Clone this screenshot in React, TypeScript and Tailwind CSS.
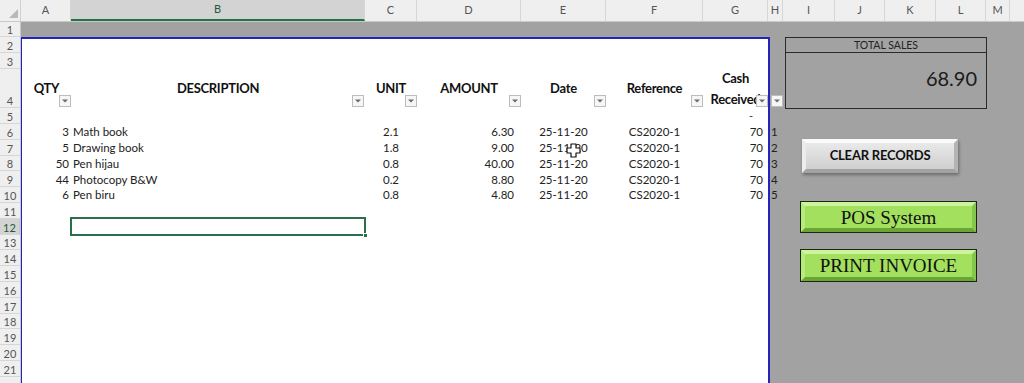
import React from "react";

const colHeaders = [
  { label: "A", w: "w-[50px]" },
  { label: "B", w: "w-[294px]", active: true },
  { label: "C", w: "w-[52px]" },
  { label: "D", w: "w-[104px]" },
  { label: "E", w: "w-[85px]" },
  { label: "F", w: "w-[97px]" },
  { label: "G", w: "w-[65px]" },
  { label: "H", w: "w-[15px]" },
  { label: "I", w: "w-[52px]" },
  { label: "J", w: "w-[50px]" },
  { label: "K", w: "w-[51px]" },
  { label: "L", w: "w-[50px]" },
  { label: "M", w: "w-[24px]" },
];

const items = [
  { qty: 3, desc: "Math book", unit: "2.1", amount: "6.30" },
  { qty: 5, desc: "Drawing book", unit: "1.8", amount: "9.00" },
  { qty: 50, desc: "Pen hijau", unit: "0.8", amount: "40.00" },
  { qty: 44, desc: "Photocopy B&W", unit: "0.2", amount: "8.80" },
  { qty: 6, desc: "Pen biru", unit: "0.8", amount: "4.80" },
];

const font = "font-['Lato',sans-serif]";

function Filter({ className = "" }: { className?: string }) {
  return (
    <span
      className={`absolute bottom-[1px] right-0 w-[12px] h-[12px] border border-[#bdbdbd] bg-[#f6f6f6] flex items-center justify-center ${className}`}
    >
      <svg width="6" height="4" viewBox="0 0 6 4">
        <path d="M0 0.5h6L3 3.5z" fill="#6a6a6a" />
      </svg>
    </span>
  );
}

function RowHeader() {
  const cell =
    "flex items-end justify-center pb-[1px] border-b border-[#d6d6d6] border-r border-r-[#c8c8c8]";
  const rest = Array.from({ length: 16 }, (_, i) => i + 6);
  return (
    <div className={`w-[21px] shrink-0 bg-[#efefef] text-[11px] text-[#555] leading-none ${font}`}>
      <div className={`${cell} h-[15px]`}>1</div>
      <div className={`${cell} h-[16px]`}>2</div>
      <div className={`${cell} h-[16px]`}>3</div>
      <div className={`${cell} h-[39px]`}>4</div>
      <div className={`${cell} h-[16px]`}>5</div>
      {rest.map((n) => (
        <div
          key={n}
          className={`${cell} h-[15.8px] ${
            n === 12 ? "bg-[#d3d3d3] text-[#1f5a38] border-r-2 border-r-[#217346]" : ""
          }`}
        >
          {n}
        </div>
      ))}
      <div className={`${cell} h-[20px]`} />
    </div>
  );
}

export default function App() {
  const dataRowCls = "h-[15.8px] flex items-center text-[11.5px] text-[#222] leading-none";

  return (
    <div className={`w-[1024px] h-[383px] overflow-hidden bg-white ${font}`}>
      {/* column letters */}
      <div className="flex h-[22px] bg-[#efefef] border-b border-[#c9c9c9] text-[11px] text-[#555]">
        <div className="w-[21px] shrink-0 relative border-r border-[#d0d0d0]">
          <svg className="absolute right-[2px] bottom-[3px]" width="9" height="9" viewBox="0 0 9 9">
            <path d="M9 0V9H0z" fill="#b9b9b9" />
          </svg>
        </div>
        {colHeaders.map((c) => (
          <div
            key={c.label}
            className={`${c.w} shrink-0 flex items-center justify-center border-r border-[#d6d6d6] ${
              c.active ? "bg-[#d3d3d3] border-b-2 border-b-[#217346] text-[#1f5a38]" : ""
            }`}
          >
            {c.label}
          </div>
        ))}
        <div className="flex-1" />
      </div>

      <div className="flex h-[361px]">
        <RowHeader />

        <div className="flex-1 bg-[#a2a2a2] flex flex-col">
          <div className="h-[15px] shrink-0" />

          <div className="flex flex-1 min-h-0">
            {/* print area */}
            <div className="w-[749px] shrink-0 bg-white border-t-2 border-r-2 border-l border-[#2424bd] relative">
              <div className="h-[14px]" />
              <div className="h-[16px]" />

              {/* header row */}
              <div className="h-[39px] flex text-[13px] font-bold text-[#111] tracking-[-0.3px]">
                <div className="w-[49px] relative flex items-center justify-center">
                  QTY
                  <Filter />
                </div>
                <div className="w-[294px] relative flex items-center justify-center">
                  DESCRIPTION
                  <Filter className="right-[1px]" />
                </div>
                <div className="w-[52px] relative flex items-center justify-center">
                  UNIT
                  <Filter />
                </div>
                <div className="w-[104px] relative flex items-center justify-center">
                  AMOUNT
                  <Filter />
                </div>
                <div className="w-[85px] relative flex items-center justify-center">
                  Date
                  <Filter />
                </div>
                <div className="w-[97px] relative flex items-center justify-center">
                  Reference
                  <Filter />
                </div>
                <div className="w-[65px] relative flex flex-col items-center justify-center leading-[21px] overflow-hidden">
                  <span>Cash</span>
                  <span className="whitespace-nowrap">Received</span>
                  <Filter />
                </div>
              </div>

              <div className="h-[16px] flex justify-end items-center pr-[15px] text-[11px] text-[#333]">
                -
              </div>

              {items.map((it, i) => (
                <div key={i} className={dataRowCls}>
                  <div className="w-[49px] text-right pr-[2px]">{it.qty}</div>
                  <div className="w-[294px] pl-[2px]">{it.desc}</div>
                  <div className="w-[52px] text-center">{it.unit}</div>
                  <div className="w-[104px] text-right pr-[7px]">{it.amount}</div>
                  <div className="w-[85px] text-center">25-11-20</div>
                  <div className="w-[97px] text-center">CS2020-1</div>
                  <div className="w-[65px] text-right pr-[5px]">70</div>
                </div>
              ))}

              <div className="h-[15.8px]" />
              <div className="h-[15.8px] flex">
                <div className="w-[49px]" />
                <div className="w-[294px] relative">
                  <div className="absolute -top-[2px] -left-[1px] -right-[1px] -bottom-[1px] border-2 border-[#2b6e4a]" />
                  <div className="absolute -bottom-[3px] -right-[3px] w-[5px] h-[5px] bg-[#2b6e4a] border border-white" />
                </div>
              </div>

              {/* mouse cursor */}
              <svg
                className="absolute left-[544px] top-[104px]"
                width="15"
                height="15"
                viewBox="0 0 15 15"
              >
                <path
                  d="M5 1h5v4h4v5h-4v4H5v-4H1V5h4z"
                  fill="#fff"
                  stroke="#111"
                  strokeWidth="1.2"
                  strokeLinejoin="round"
                />
              </svg>
            </div>

            {/* column H */}
            <div className="w-[13px] shrink-0 text-[11.5px] text-[#222] leading-none">
              <div className="h-[16px]" />
              <div className="h-[16px]" />
              <div className="h-[39px] relative">
                <Filter className="bottom-[1px]" />
              </div>
              <div className="h-[16px]" />
              {[1, 2, 3, 4, 5].map((n) => (
                <div key={n} className="h-[15.8px] flex items-center pl-[1px]">
                  {n}
                </div>
              ))}
            </div>

            {/* dashboard side */}
            <div className="flex-1 flex flex-col">
              <div className="ml-[2px] w-[202px] h-[72px] border-[1.5px] border-[#2a2a2a] flex flex-col">
                <div className="h-[15px] border-b-[1.5px] border-[#2a2a2a] flex items-center justify-center text-[10.5px] text-[#222] leading-none">
                  TOTAL SALES
                </div>
                <div className="flex-1 flex items-center justify-end pr-[9px] pb-[5px] text-[20px] text-[#1a1a1a]">
                  68.90
                </div>
              </div>

              <button className="mt-[30px] ml-[19px] w-[156px] h-[34px] border-[4px] border-t-[#fafafa] border-l-[#ececec] border-r-[#b4b4b4] border-b-[#a2a2a2] bg-gradient-to-b from-[#e9e9e9] to-[#cfcfcf] shadow-[1px_2px_3px_rgba(0,0,0,0.35)] flex items-center justify-center text-[13px] font-bold text-[#111] tracking-[-0.2px]">
                CLEAR RECORDS
              </button>

              <div className="mt-[28px] ml-[17px] w-[177px] h-[32px] border-[1.5px] border-[#1b2510]">
                <div className="w-full h-full border-[4px] border-t-[#cdf59f] border-l-[#b6ec7e] border-r-[#83c74c] border-b-[#6aa635] bg-[#a2e05e] flex items-center justify-center font-['Liberation_Serif',serif] text-[19px] text-[#111] leading-none">
                  POS System
                </div>
              </div>

              <div className="mt-[16px] ml-[17px] w-[177px] h-[33px] border-[1.5px] border-[#1b2510]">
                <div className="w-full h-full border-[4px] border-t-[#cdf59f] border-l-[#b6ec7e] border-r-[#83c74c] border-b-[#6aa635] bg-[#a2e05e] flex items-center justify-center font-['Liberation_Serif',serif] text-[19px] text-[#111] leading-none">
                  PRINT INVOICE
                </div>
              </div>
            </div>
          </div>
        </div>
      </div>
    </div>
  );
}
